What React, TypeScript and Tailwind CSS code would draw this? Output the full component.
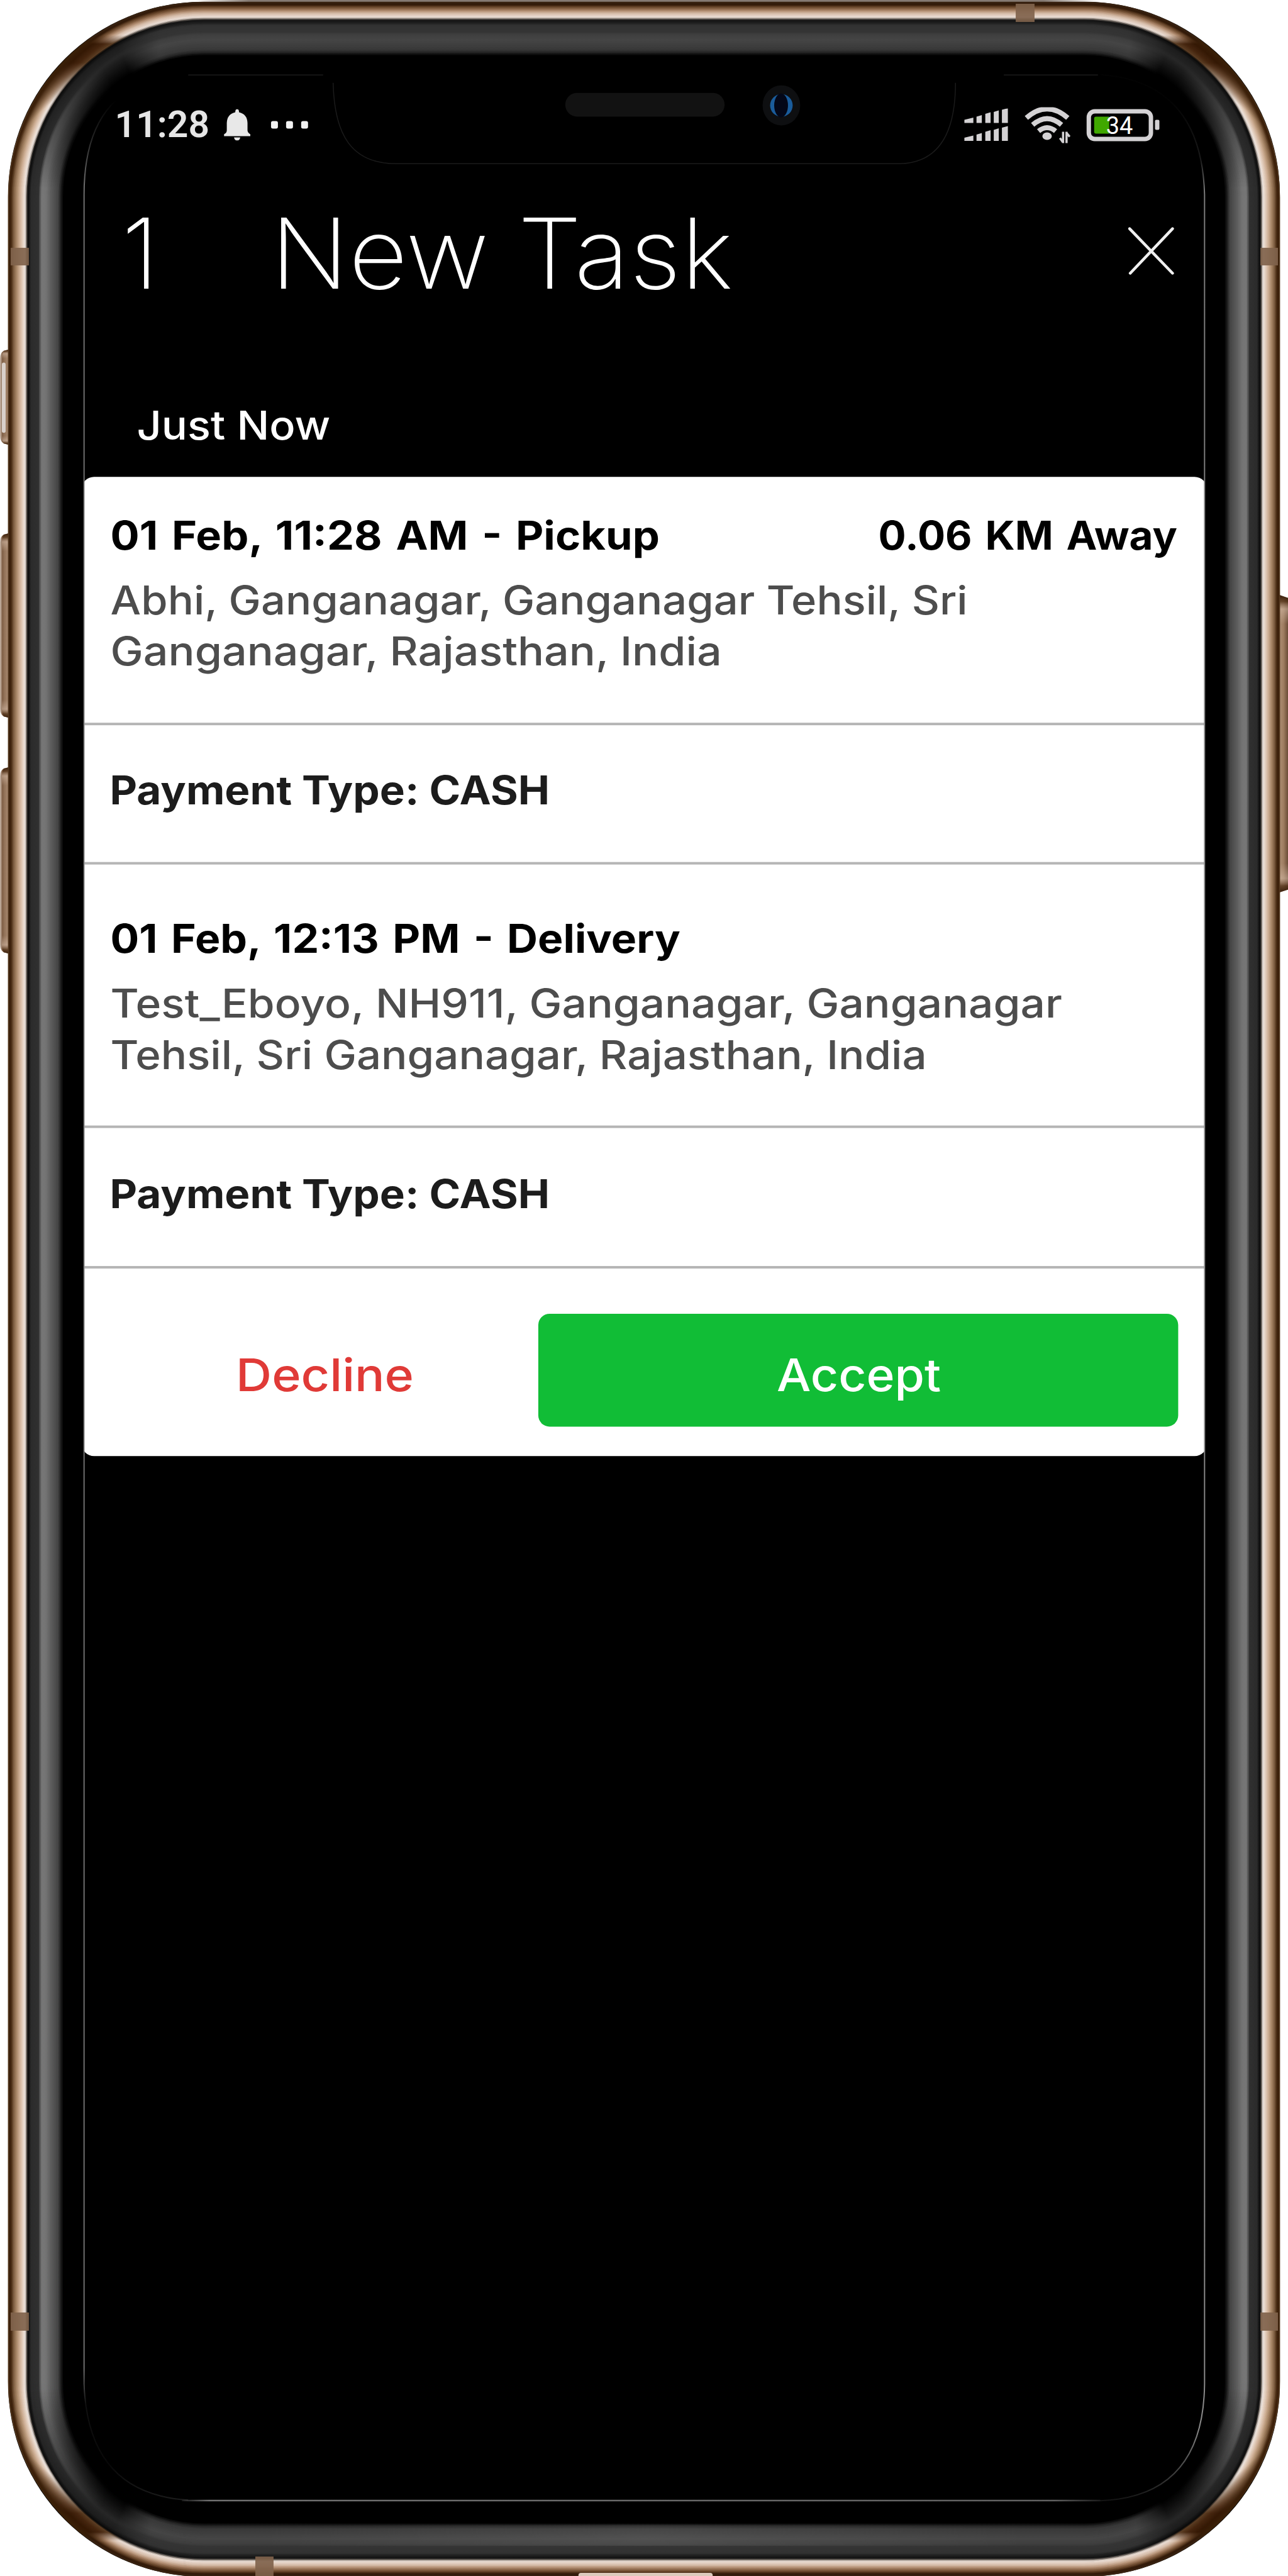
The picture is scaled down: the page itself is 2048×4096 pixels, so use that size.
import { useLayoutEffect, useRef, useState, type ReactNode } from "react";

type RGB = [number, number, number];
type Stop = [number, string];

const hex = (c: string): RGB => [
  parseInt(c.slice(1, 3), 16),
  parseInt(c.slice(3, 5), 16),
  parseInt(c.slice(5, 7), 16),
];

function sample(stops: Stop[], t: number): string {
  let i = 0;
  while (i < stops.length - 2 && t > stops[i + 1][0]) i++;
  const [a, ca] = stops[i];
  const [b, cb] = stops[i + 1];
  const k = Math.min(1, Math.max(0, (t - a) / (b - a)));
  const p = hex(ca);
  const q = hex(cb);
  return `rgb(${p.map((v, n) => Math.round(v + (q[n] - v) * k)).join(",")})`;
}

// Colour of the metal and glass rim, measured inwards from its outer edge.
const SIDE: Stop[] = [
  [0, "#54381f"], [2, "#351a05"], [5, "#4a2d14"], [8, "#7a5a3e"], [13, "#a98868"],
  [18, "#cfb096"], [24, "#ead9cc"], [26.5, "#eee6e2"], [28.5, "#8a8078"], [30.5, "#0a0a0a"],
  [33, "#141414"], [36, "#2b2b2b"], [48, "#303030"], [50, "#505050"], [53, "#777777"],
  [60, "#737373"], [68, "#5c5c5c"], [79, "#444444"], [83, "#222222"], [87, "#000000"],
];
const END: Stop[] = [
  [0, "#3a2412"], [4, "#2e1606"], [7, "#5a3a20"], [11, "#8a6548"], [15, "#b8957a"],
  [19, "#d8bfac"], [25, "#ece0d8"], [27, "#8a8078"], [29.5, "#101010"], [35, "#222222"],
  [38, "#323232"], [49, "#343434"], [53, "#3e3e3e"], [62, "#454545"], [78, "#383838"],
  [83, "#222222"], [87, "#000000"],
];
const BEND: Stop[] = [
  [0, "#3a2008"], [10, "#341804"], [20, "#46260f"], [27, "#5a3c22"], [29.5, "#080808"],
  [36, "#1c1c1c"], [50, "#262626"], [58, "#1c1c1c"], [74, "#0a0a0a"], [84, "#000000"], [87, "#000000"],
];

const STEP = 1.5;
const RINGS = Array.from({ length: 58 }, (_, i) => i * STEP);
const H = 4106;

function Rim() {
  return (
    <svg className="absolute inset-0" width="2053" height="4106" viewBox="0 0 2053 4106">
      <defs>
        {RINGS.map((t, i) => {
          const end = sample(END, t);
          const bend = sample(BEND, t);
          const side = sample(SIDE, t);
          const metal = t < 29;
          const y1 = metal ? 56 : 12 + t;
          const y2 = metal ? 70 : 42 + t * 0.9;
          const y3 = metal ? 100 : 62 + t * 0.9;
          const y4 = metal ? 215 - t * 2 : 300;
          return (
            <linearGradient key={i} id={`ring${i}`} gradientUnits="userSpaceOnUse" x1="0" y1="0" x2="0" y2={H}>
              <stop offset={y1 / H} stopColor={end} />
              <stop offset={y2 / H} stopColor={bend} />
              <stop offset={y3 / H} stopColor={bend} />
              <stop offset={y4 / H} stopColor={side} />
              <stop offset={1 - y4 / H} stopColor={side} />
              <stop offset={1 - y3 / H} stopColor={bend} />
              <stop offset={1 - y2 / H} stopColor={bend} />
              <stop offset={1 - y1 / H} stopColor={end} />
            </linearGradient>
          );
        })}
        <linearGradient id="edge" x1="0" x2="1" y1="0" y2="0">
          <stop offset="0" stopColor="#857a72" stopOpacity="0" />
          <stop offset="0.06" stopColor="#857a72" />
          <stop offset="0.94" stopColor="#857a72" />
          <stop offset="1" stopColor="#857a72" stopOpacity="0" />
        </linearGradient>
        <linearGradient id="keyLeft" x1="0" x2="1" y1="0" y2="0">
          <stop offset="0" stopColor="#cdbcae" />
          <stop offset="0.22" stopColor="#7d5c42" />
          <stop offset="0.34" stopColor="#8f6f55" />
          <stop offset="0.75" stopColor="#a98a70" />
          <stop offset="1" stopColor="#5a3a20" />
        </linearGradient>
        <linearGradient id="keyRight" x1="0" x2="1" y1="0" y2="0">
          <stop offset="0" stopColor="#6a4a2e" />
          <stop offset="0.3" stopColor="#a98a70" />
          <stop offset="0.6" stopColor="#a07e62" />
          <stop offset="1" stopColor="#6a4c36" />
        </linearGradient>
        <linearGradient id="keyEnds" x1="0" x2="0" y1="0" y2="1">
          <stop offset="0" stopColor="#2e1606" />
          <stop offset="0.025" stopColor="#4a2a10" stopOpacity="0.7" />
          <stop offset="0.05" stopColor="#d8bfac" stopOpacity="0.5" />
          <stop offset="0.1" stopColor="#d8bfac" stopOpacity="0" />
          <stop offset="0.9" stopColor="#d8bfac" stopOpacity="0" />
          <stop offset="0.95" stopColor="#d8bfac" stopOpacity="0.5" />
          <stop offset="0.975" stopColor="#4a2a10" stopOpacity="0.7" />
          <stop offset="1" stopColor="#2e1606" />
        </linearGradient>
        <linearGradient id="glow" gradientUnits="userSpaceOnUse" x1="0" x2="2053" y1="0" y2="0">
          <stop offset="0.2" stopColor="#ffffff" stopOpacity="0" />
          <stop offset="0.5" stopColor="#ffffff" stopOpacity="0.07" />
          <stop offset="0.8" stopColor="#ffffff" stopOpacity="0" />
        </linearGradient>
      </defs>

      {[[556, 154], [849, 296], [1222, 299]].map(([y, h]) => (
        <g key={y}>
          <path d={`M18 ${y} L6 ${y + 3} Q0 ${y + 6} 0 ${y + 16} V${y + h - 16} Q0 ${y + h - 6} 6 ${y + h - 3} L18 ${y + h} Z`} fill="url(#keyLeft)" />
          <path d={`M18 ${y} L6 ${y + 3} Q3 ${y + 6} 3 ${y + 16} V${y + h - 16} Q3 ${y + h - 6} 6 ${y + h - 3} L18 ${y + h} Z`} fill="url(#keyEnds)" />
        </g>
      ))}
      <rect x="3" y="578" width="6" height="112" rx="3" fill="#d9d0ca" />
      <path d="M2035 947 L2053 953 V1418 L2035 1424 Z" fill="url(#keyRight)" />
      <path d="M2035 947 L2053 953 V1418 L2035 1424 Z" fill="url(#keyEnds)" />

      <rect x="310" y="0" width="1440" height="4" fill="url(#edge)" />
      <rect x="13" y="3" width="2027" height="4104" rx="310" ry="308" fill="#000000" />
      {RINGS.map((t, i) => (
        <rect
          key={i}
          x={13 + t + STEP / 2}
          y={3 + t * 0.97 + STEP / 2}
          width={2027 - 2 * t - STEP}
          height={4104 - 1.94 * t - STEP}
          rx={311 - t}
          fill="none"
          stroke={`url(#ring${i})`}
          strokeWidth={STEP + 0.7}
        />
      ))}
      <rect x="300" y="4024" width="1450" height="34" fill="url(#glow)" />

      <g fill="#80634c" fillOpacity="0.92">
        <rect x="17" y="395" width="29" height="28" />
        <rect x="2009" y="395" width="28" height="28" />
        <rect x="17" y="3686" width="29" height="29" />
        <rect x="2009" y="3686" width="28" height="29" />
        <rect x="1619" y="6" width="30" height="29" />
        <rect x="407" y="4075" width="29" height="31" />
      </g>
      <rect x="922" y="4101" width="214" height="9" rx="4" fill="#dccbbd" />
    </svg>
  );
}

function ScreenOutline() {
  return (
    <svg className="pointer-events-none absolute inset-0" width="2053" height="4106" viewBox="0 0 2053 4106" fill="none">
      <defs>
        <linearGradient id="sideLine" gradientUnits="userSpaceOnUse" x1="0" y1="160" x2="0" y2="3985">
          <stop offset="0" stopColor="#888888" stopOpacity="0" />
          <stop offset="0.015" stopColor="#888888" stopOpacity="0.25" />
          <stop offset="0.035" stopColor="#888888" stopOpacity="0.8" />
          <stop offset="0.945" stopColor="#888888" stopOpacity="0.8" />
          <stop offset="0.96" stopColor="#888888" stopOpacity="0.12" />
          <stop offset="0.985" stopColor="#888888" stopOpacity="0.06" />
          <stop offset="1" stopColor="#888888" stopOpacity="0.2" />
        </linearGradient>
        <linearGradient id="rightLine" gradientUnits="userSpaceOnUse" x1="0" y1="160" x2="0" y2="3985">
          <stop offset="0" stopColor="#888888" stopOpacity="0.02" />
          <stop offset="0.025" stopColor="#888888" stopOpacity="0.2" />
          <stop offset="0.038" stopColor="#888888" stopOpacity="0.9" />
          <stop offset="0.97" stopColor="#999999" stopOpacity="0.9" />
          <stop offset="1" stopColor="#888888" stopOpacity="0.15" />
        </linearGradient>
        <linearGradient id="bottomLine" gradientUnits="userSpaceOnUse" x1="290" y1="0" x2="1754" y2="0">
          <stop offset="0" stopColor="#707070" stopOpacity="0.2" />
          <stop offset="0.03" stopColor="#707070" />
          <stop offset="0.95" stopColor="#606060" />
          <stop offset="1" stopColor="#606060" stopOpacity="0.3" />
        </linearGradient>
      </defs>
      <path d="M299 119 Q134 125 134 310 V3800 Q140 3975 300 3985" stroke="url(#sideLine)" strokeWidth="2" />
      <path d="M1754 119 Q1915 130 1920 310 V3800 Q1918 3980 1754 3986" stroke="url(#rightLine)" strokeWidth="2" />
      <rect x="290" y="3984.500" width="1464" height="2.500" fill="url(#bottomLine)" />
      <path d="M300 119.500 H515 M531 132 C533 215 560 261 632 261 H1435 C1495 259 1523 215 1523 132 M1600 119.500 H1750" stroke="#1b1b1b" strokeWidth="1.500" />
      <rect x="901" y="148" width="254" height="38" rx="19" fill="#121212" />
      <ellipse cx="1245.500" cy="168" rx="30" ry="32" fill="#0e0f11" />
      <circle cx="1245.500" cy="168" r="18" fill="#1a5c9b" />
      <ellipse cx="1245" cy="168" rx="11" ry="19" fill="#030718" />
    </svg>
  );
}

/* A single line of text stretched to an exact width. */
function Line({ width, className, children }: { width: number; className: string; children: ReactNode }) {
  const ref = useRef<HTMLSpanElement>(null);
  const [k, setK] = useState(1);
  useLayoutEffect(() => {
    const fit = () => {
      if (ref.current) setK(width / ref.current.offsetWidth);
    };
    fit();
    document.fonts.ready.then(fit);
  }, [width]);
  return (
    <span ref={ref} className={`block w-max origin-left whitespace-pre ${className}`} style={{ transform: `scaleX(${k})` }}>
      {children}
    </span>
  );
}

function Signal() {
  return (
    <svg width="70" height="52" viewBox="0 0 70 52" fill="#d4d2d4">
      {[0, 28.5].map((dy) => (
        <g key={dy} transform={`translate(0 ${dy})`}>
          <path d="M0 18 L14.500 14.500 V23 H0 Z" />
          <path d="M19.500 13 L28 10.500 V23 H19.500 Z" />
          <path d="M33.500 8.500 L42 6 V23 H33.500 Z" />
          <path d="M47 5.500 L55 3 V23 H47 Z" />
          <path d="M60 2 L69.500 -0.500 V23 H60 Z" />
        </g>
      ))}
    </svg>
  );
}

function Wifi() {
  return (
    <svg width="74" height="58" viewBox="0 0 74 58" fill="none" stroke="#d4d2d4">
      <path d="M3 17 Q36 -12 69 17" strokeWidth="8" />
      <path d="M13 28 Q36 8 59 28" strokeWidth="8" />
      <path d="M22.500 38 Q36 27 49.500 38" strokeWidth="8" />
      <ellipse cx="36" cy="46" rx="7.500" ry="6" fill="#d4d2d4" stroke="none" />
      <path d="M61.500 39 V57 M56.500 49 L61.500 56 M67 57 V39 M67 41 L72 47" strokeWidth="3.500" />
    </svg>
  );
}

function StatusBar() {
  return (
    <div className="flex h-[160px] items-center pl-[49px] pr-[72px]">
      <Line width={151} className="font-['Roboto',sans-serif] text-[59px] font-semibold leading-[80px] text-[#e6e6e6]">11:28</Line>
      <svg className="ml-[23px]" width="42" height="50" viewBox="0 0 42 50" fill="#e8e8e8">
        <path d="M21 0 Q24 0 24 5 Q37 8 37.500 22 V34 Q38 38 42 40 V43 H0 V40 Q4.500 38 4.500 34 V22 Q5 8 18 5 Q18 0 21 0 Z" />
        <path d="M16 45 H26 Q25 50 21 50 Q17 50 16 45 Z" />
      </svg>
      <div className="ml-[33px] flex gap-[13px]">
        <div className="h-[12px] w-[11px] rounded-[3px] bg-[#f2f2f2]" />
        <div className="h-[12px] w-[11px] rounded-[3px] bg-[#f2f2f2]" />
        <div className="h-[12px] w-[11px] rounded-[3px] bg-[#f2f2f2]" />
      </div>
      <div className="ml-auto flex items-center">
        <Signal />
        <div className="ml-[26px] mt-[2px]"><Wifi /></div>
        <div className="ml-[25px] flex h-[51px] w-[106px] items-center rounded-[13px] border-[7px] border-[#d4d2d4] pl-[5px]">
          <div className="h-[27px] w-[24px] shrink-0 rounded-l-[3px] bg-[#40a800]" />
          <div className="-ml-[5px] pt-[3px] font-['Roboto',sans-serif] text-[38px] leading-[36px] text-white">34</div>
        </div>
        <div className="ml-[3px] h-[16px] w-[7px] rounded-[2px] bg-[#d4d2d4]" />
      </div>
    </div>
  );
}

function Header() {
  return (
    <div className="flex h-[250px] items-center pr-[48px] text-[155px] font-[240] leading-[200px] text-white">
      <div className="w-[297px] pl-[60px]">1</div>
      <Line width={738} className="">New Task</Line>
      <svg className="mb-[8px] ml-auto" width="74" height="76" viewBox="0 0 74 76" stroke="#f0f0f0" strokeWidth="4.500" strokeLinecap="round">
        <path d="M2.500 2.500 L71 73.500 M71 2.500 L3.500 73.500" />
      </svg>
    </div>
  );
}

const heading = "text-[63px] font-bold leading-[82px] [word-spacing:5px] text-black";
const address = "text-[63px] font-medium leading-[82px] text-[#4d4d4d]";
const payment = "text-[63px] font-bold leading-[82px] text-[#1c1c1c]";

function TaskCard() {
  return (
    <div className="-mx-[4px] h-[1561px] overflow-hidden rounded-[20px] bg-white">
      <section className="h-[396px] border-b-[4px] border-[#b5b5b5] px-[46px] pt-[52px]">
        <div className="relative flex">
          <Line width={875} className={heading}>01 Feb, 11:28 AM - Pickup</Line>
          <div className="absolute left-[1224px]">
            <Line width={477} className={heading}>0.06 KM Away</Line>
          </div>
        </div>
        <div className="mt-[21px]">
          <Line width={1366} className={address}>Abhi, Ganganagar, Ganganagar Tehsil, Sri</Line>
          <Line width={975} className={address}>Ganganagar, Rajasthan, India</Line>
        </div>
      </section>
      <section className="h-[222px] border-b-[4px] border-[#b5b5b5] px-[45px] pt-[62px]">
        <Line width={701} className={payment}>Payment Type: CASH</Line>
      </section>
      <section className="h-[420px] border-b-[4px] border-[#b5b5b5] px-[46px] pt-[77px]">
        <Line width={908} className={heading}>01 Feb, 12:13 PM - Delivery</Line>
        <div className="mt-[21px]">
          <Line width={1517} className={address}>Test_Eboyo, NH911, Ganganagar, Ganganagar</Line>
          <Line width={1301} className={address}>Tehsil, Sri Ganganagar, Rajasthan, India</Line>
        </div>
      </section>
      <section className="h-[224px] border-b-[4px] border-[#b5b5b5] px-[45px] pt-[64px]">
        <Line width={701} className={payment}>Payment Type: CASH</Line>
      </section>
      <section className="flex pl-[46px] pt-[72px] text-[72px] font-medium leading-[90px]">
        <button className="flex h-[180px] w-[682px] items-center pl-[200px] pt-[14px] text-[#e03a37]">
          <Line width={284} className="">Decline</Line>
        </button>
        <button className="flex h-[180px] w-[1020px] items-center rounded-[18px] bg-[#11bd36] pl-[380px] pt-[14px] text-white">
          <Line width={262} className="">Accept</Line>
        </button>
      </section>
    </div>
  );
}

export default function App() {
  return (
    <div className="h-[4096px] w-[2048px] overflow-hidden bg-white">
      <div className="relative h-[4106px] w-[2053px] origin-top-left scale-[0.99756] pl-[134px] pt-[119px] font-['Inter',sans-serif]">
        <Rim />
        <main className="relative h-[3867px] w-[1786px] overflow-hidden rounded-[180px] bg-black">
          <StatusBar />
          <Header />
          <div className="h-[231px] pl-[84px] pt-[108px] text-white">
            <Line width={309} className="text-[64px] font-medium leading-[82px]">Just Now</Line>
          </div>
          <TaskCard />
        </main>
        <ScreenOutline />
      </div>
    </div>
  );
}
